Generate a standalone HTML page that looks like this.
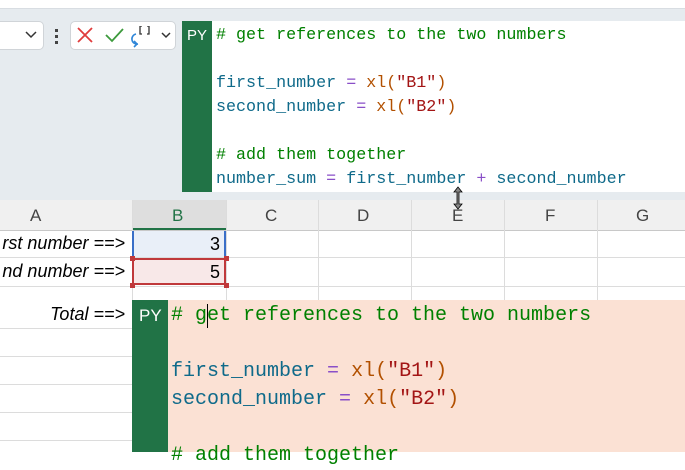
<html><head><style>
body{margin:0;width:685px;height:452px;overflow:hidden;position:relative;background:#fff;font-family:"Liberation Sans",sans-serif}
.a{position:absolute}
.code{font-family:"Liberation Mono",monospace;white-space:pre}
.c{color:#008000}.v{color:#0f6a8a}.f{color:#b25000}.s{color:#a31515}.p{color:#8a4fc8}
</style></head><body>
<div class="a" style="left:0;top:0;width:685px;height:8px;background:#fff;border-bottom:1px solid #d8dde2"></div>
<div class="a" style="left:0;top:9px;width:685px;height:191px;background:#e6ebef"></div>
<div class="a" style="left:-10px;top:21px;width:52px;height:27px;background:#fff;border:1px solid #d0d4d8;border-radius:5px"></div>
<svg class="a" style="left:24px;top:30px" width="14" height="10"><path d="M2 2l5 5 5-5" stroke="#333" stroke-width="1.5" fill="none"/></svg>
<div class="a" style="left:55px;top:29px;width:3px;height:3px;background:#444"></div>
<div class="a" style="left:55px;top:35px;width:3px;height:3px;background:#444"></div>
<div class="a" style="left:55px;top:41px;width:3px;height:3px;background:#444"></div>
<div class="a" style="left:70px;top:21px;width:104px;height:27px;background:#fff;border:1px solid #d0d4d8;border-radius:5px"></div>
<svg class="a" style="left:76px;top:26px" width="100" height="22">
<path d="M2 2l14 14M16 2L2 16" stroke="#e03c3c" stroke-width="1.8"/>
<path d="M30 9l6 6 11-12" stroke="#3c9a3c" stroke-width="1.8" fill="none"/>
<path d="M60 8a5 5 0 1 0 2 10" stroke="#2f86d8" stroke-width="1.6" fill="none"/><path d="M58 15l3 3-3 3" stroke="#2f86d8" stroke-width="1.6" fill="none"/>
<path d="M66 0h-2v8h2M71 0h2v8h-2" stroke="#333" stroke-width="1.3" fill="none"/>
<path d="M86 7l4 4 4-4" stroke="#333" stroke-width="1.5" fill="none"/>
</svg>
<div class="a" style="left:182px;top:21px;width:503px;height:171px;background:#fff;border-left:1px solid #999"></div>
<div class="a" style="left:182px;top:21px;width:30px;height:171px;background:#217346"></div>
<div class="a" style="left:187px;top:27px;color:#fff;font-size:15px">PY</div>
<div class="a code" style="left:216px;top:24px;font-size:16.7px;line-height:24px"><span class="c"># get references to the two numbers</span>

<span class="v">first_number</span> <span class="p">=</span> <span class="f">xl(</span><span class="s">"B1"</span><span class="f">)</span>
<span class="v">second_number</span> <span class="p">=</span> <span class="f">xl(</span><span class="s">"B2"</span><span class="f">)</span>

<span class="c"># add them together</span>
<span class="v">number_sum</span> <span class="p">=</span> <span class="v">first_number</span> <span class="p">+</span> <span class="v">second_number</span></div>
<div class="a" style="left:0;top:200px;width:685px;height:30px;background:#f0f0f0;border-bottom:1px solid #c8c8c8"></div>
<div class="a" style="left:132px;top:200px;width:94px;height:28px;background:#dedede;border-bottom:2px solid #217346"></div>
<div class="a" style="left:0;top:200px;width:685px;height:30px;font-size:17px;color:#444">
<span class="a" style="left:30px;top:6px">A</span><span class="a" style="left:172px;top:6px;color:#217346">B</span><span class="a" style="left:265px;top:6px">C</span><span class="a" style="left:357px;top:6px">D</span><span class="a" style="left:452px;top:6px">E</span><span class="a" style="left:545px;top:6px">F</span><span class="a" style="left:636px;top:6px">G</span></div>
<svg class="a" style="left:0;top:200px" width="685" height="252">
<g stroke="#dcdcdc" stroke-width="1">
<path d="M132.5 0v100M226.5 0v100M318.5 0v100M411.5 0v100M504.5 0v100M597.5 0v100"/>
<path d="M0 57.5h685M0 86.5h685M0 128.5h132M0 156.5h132M0 184.5h132M0 212.5h132M0 240.5h132"/>
</g></svg>
<div class="a" style="left:132px;top:231px;width:94px;height:26px;background:#e9eff8;border:1px solid #3a6fc8;border-width:0 2px;box-sizing:border-box"></div>
<div class="a" style="left:132px;top:258px;width:94px;height:27px;background:#f8e8e8;border:2px solid #c0393b;box-sizing:border-box"></div>
<div class="a" style="left:130px;top:256px;width:5px;height:5px;background:#c0393b"></div><div class="a" style="left:224px;top:256px;width:5px;height:5px;background:#c0393b"></div>
<div class="a" style="left:130px;top:283px;width:5px;height:5px;background:#c0393b"></div><div class="a" style="left:224px;top:283px;width:5px;height:5px;background:#c0393b"></div>
<div class="a" style="right:560px;top:233px;font-size:18px;font-style:italic;white-space:nowrap">rst number ==&gt;</div>
<div class="a" style="right:560px;top:261px;font-size:18px;font-style:italic;white-space:nowrap">nd number ==&gt;</div>
<div class="a" style="left:210px;top:234px;font-size:18px">3</div>
<div class="a" style="left:210px;top:262px;font-size:18px">5</div>
<div class="a" style="right:560px;top:304px;font-size:18px;font-style:italic;white-space:nowrap">Total ==&gt;</div>
<div class="a" style="left:132px;top:300px;width:553px;height:152px;background:#fbe1d4"></div>
<div class="a" style="left:132px;top:300px;width:36px;height:152px;background:#217346"></div>
<div class="a" style="left:139px;top:306px;color:#fff;font-size:17px">PY</div>
<div class="a code" style="left:171px;top:302px;font-size:20px;line-height:28px"><span class="c"># get references to the two numbers</span>

<span class="v">first_number</span> <span class="p">=</span> <span class="f">xl(</span><span class="s">"B1"</span><span class="f">)</span>
<span class="v">second_number</span> <span class="p">=</span> <span class="f">xl(</span><span class="s">"B2"</span><span class="f">)</span>

<span class="c"># add them together</span></div>
<div class="a" style="left:207px;top:304px;width:1px;height:24px;background:#000"></div>
<svg class="a" style="left:452px;top:186px" width="12" height="24"><path d="M6 1l-4 5h3v12h-3l4 5 4-5h-3v-12h3z" fill="#888" stroke="#000" stroke-width="0.8"/></svg>
</body></html>
